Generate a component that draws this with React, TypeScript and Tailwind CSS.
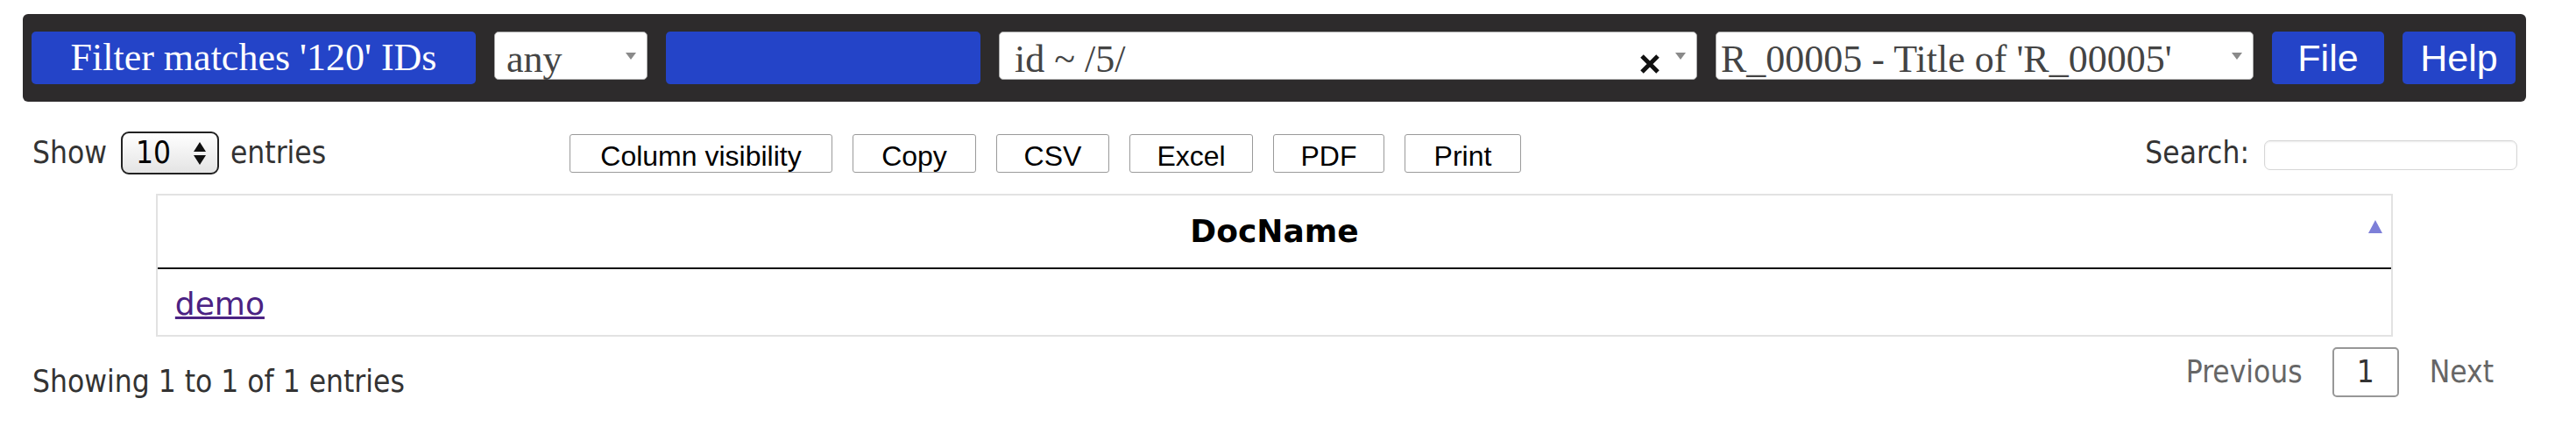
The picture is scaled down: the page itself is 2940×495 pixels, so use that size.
import React from 'react';

const serif = "font-['Liberation_Serif',serif]";
const sans = "font-['Liberation_Sans',Arial,sans-serif]";
const dt = "font-['DejaVu_Sans_Condensed','Liberation_Sans',sans-serif]";

function Caret() {
  return <span className="mr-[12px] h-0 w-0 border-x-[6px] border-t-[8px] border-x-transparent border-t-[#8a8a8a]" />;
}

function Select2({ width, pad, value, clear }: { width: string; pad: string; value: string; clear?: boolean }) {
  return (
    <div className={`${width} h-[55px] flex items-center bg-white border border-[#aaa] rounded-[5px] shrink-0`}>
      <span className={`${pad} pt-[7px] flex-1 truncate text-[44px] leading-[53px] text-[#444] ${serif}`}>{value}</span>
      {clear && (
        <svg width="24" height="22" viewBox="0 0 24 22" className="mr-[17px] mt-[18px]">
          <path d="M3 2 L21 20 M21 2 L3 20" stroke="#111" strokeWidth="5" />
        </svg>
      )}
      <Caret />
    </div>
  );
}

const buttons = [
  { label: 'Column visibility', w: 'w-[300px]' },
  { label: 'Copy', w: 'w-[141px]' },
  { label: 'CSV', w: 'w-[129px]' },
  { label: 'Excel', w: 'w-[141px]' },
  { label: 'PDF', w: 'w-[127px]' },
  { label: 'Print', w: 'w-[133px]' },
];

export default function App() {
  return (
    <div className="bg-white min-h-[495px] pl-[26px] pr-[57px] pt-4">
      {/* top bar */}
      <div className="h-[100px] bg-[#2d2b2c] rounded-[6px] pl-[10px] pr-[12px] pt-5 flex items-start gap-[21px]">
        <div className={`w-[507px] h-[60px] shrink-0 bg-[#2444c8] rounded-[5px] text-white text-[44px] leading-[60px] text-center ${serif}`}>
          Filter matches '120' IDs
        </div>
        <Select2 width="w-[175px]" pad="pl-[13px]" value="any" />
        <div className="w-[359px] h-[60px] shrink-0 bg-[#2444c8] rounded-[5px]" />
        <Select2 width="w-[797px]" pad="pl-[17px]" value="id ~ /5/" clear />
        <Select2 width="w-[614px]" pad="pl-[5px]" value="R_00005 - Title of 'R_00005'" />
        <div className={`w-[128px] h-[60px] shrink-0 bg-[#2444c8] rounded-[5px] text-white text-[43px] leading-[60px] text-center ${sans}`}>File</div>
        <div className={`w-[129px] h-[60px] shrink-0 bg-[#2444c8] rounded-[5px] text-white text-[43px] leading-[60px] text-center ${sans}`}>Help</div>
      </div>

      <div className={`px-[10px] text-[#333] ${dt}`}>
        {/* controls */}
        <div className="mt-[34px] h-[49px] flex items-center">
          <div className="w-[614px] shrink-0 flex items-center">
            <span className="ml-[1px] text-[35px]">Show</span>
            <div className="ml-[16px] w-[112px] h-[49px] flex items-center border-2 border-[#222] rounded-[9px] bg-gradient-to-b from-white to-[#e4e4e4]">
              <span className="pl-[15px] flex-1 text-[35px] text-black">10</span>
              <svg width="16" height="28" viewBox="0 0 16 28" className="mr-[12px]">
                <path d="M8 1 L15 12 L1 12 Z M8 27 L15 16 L1 16 Z" fill="#111" />
              </svg>
            </div>
            <span className="ml-[13px] text-[35px]">entries</span>
          </div>

          <div className="flex gap-[23px]">
            {buttons.map((b) => (
              <button
                key={b.label}
                className={`${b.w} h-[44px] bg-white border border-[#9a9a9a] rounded-[3px] text-[32px] text-black ${sans}`}
              >
                {b.label}
              </button>
            ))}
          </div>

          <div className="ml-auto flex items-center">
            <span className="text-[35px]">Search:</span>
            <div className="ml-[17px] w-[289px] h-[34px] mt-[4px] border border-[#d6d6d6] rounded-[7px] bg-white shadow-[inset_0_1px_2px_rgba(0,0,0,0.08)]" />
          </div>
        </div>

        {/* table */}
        <div className="mt-[22px] w-[90%] mx-auto border-2 border-[#e2e2e2]">
          <div className="h-[84px] flex items-center relative border-b-2 border-[#111]">
            <span className="flex-1 text-center text-[36px] font-bold text-black font-['DejaVu_Sans',sans-serif]">DocName</span>
            <svg width="16" height="15" viewBox="0 0 16 15" className="absolute right-[10px] top-[28px]">
              <path d="M8 0 L16 15 L0 15 Z" fill="#7d7fd8" />
            </svg>
          </div>
          <div className="h-[75px] flex items-center pl-[20px] pt-[5px]">
            <a href="#" className="text-[36px] text-[#4b2283] underline font-['DejaVu_Sans',sans-serif]">demo</a>
          </div>
        </div>

        {/* footer */}
        <div className="mt-[12px] flex items-start">
          <span className="mt-[13px] ml-[1px] text-[35px]">Showing 1 to 1 of 1 entries</span>
          <div className="ml-auto flex items-center pr-[27px]">
            <span className="text-[35px] text-[#666]">Previous</span>
            <span className="ml-[34px] w-[76px] h-[57px] flex items-center justify-center border-2 border-[#979797] rounded-[5px] text-[35px] text-[#333]">1</span>
            <span className="ml-[35px] text-[35px] text-[#666]">Next</span>
          </div>
        </div>
      </div>
    </div>
  );
}
